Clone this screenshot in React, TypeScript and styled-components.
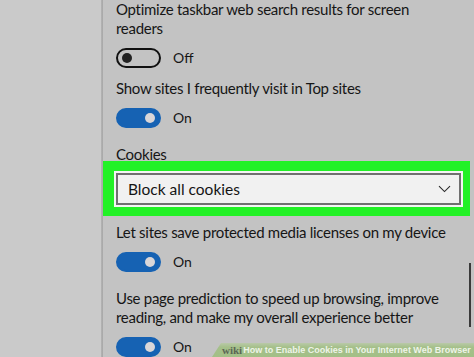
import styled, { createGlobalStyle } from "styled-components";

const GlobalStyle = createGlobalStyle`
  html, body {
    margin: 0;
    padding: 0;
    width: 474px;
    height: 357px;
    overflow: hidden;
    background: #c9c9c9;
  }
  * { box-sizing: border-box; }
`;

export default function App() {
  return (
    <Page>
      <GlobalStyle />
      <SidePane />
      <Divider />
      <Settings>
        <Label>
          Optimize taskbar web search results for screen
          <br />
          readers
        </Label>
        <ToggleRow>
          <Toggle $on={false} />
          <State>Off</State>
        </ToggleRow>

        <Label $gap={11}>Show sites I frequently visit in Top sites</Label>
        <ToggleRow>
          <Toggle $on />
          <State>On</State>
        </ToggleRow>

        <Label $gap={17}>Cookies</Label>
        <Highlight>
          <Dropdown>
            <span>Block all cookies</span>
            <svg width="13" height="8" viewBox="0 0 13 8">
              <path d="M1 1.2 L6.5 6.6 L12 1.2" fill="none" stroke="#2a2a2a" strokeWidth="1.1" />
            </svg>
          </Dropdown>
        </Highlight>

        <Label $gap={7}>Let sites save protected media licenses on my device</Label>
        <ToggleRow>
          <Toggle $on />
          <State>On</State>
        </ToggleRow>

        <Label $gap={17}>
          Use page prediction to speed up browsing, improve
          <br />
          reading, and make my overall experience better
        </Label>
        <ToggleRow>
          <Toggle $on />
          <State>On</State>
        </ToggleRow>

        <Scrollbar />
      </Settings>

      <Watermark>
        <b>wiki</b>
        <span>How to Enable Cookies in Your Internet Web Browser</span>
      </Watermark>
    </Page>
  );
}

const Page = styled.div`
  position: relative;
  display: flex;
  width: 474px;
  height: 357px;
  overflow: hidden;
  font-family: Lato, "Open Sans", sans-serif;
  color: #161616;
`;

const SidePane = styled.div`
  flex: 0 0 101px;
  background: #cacaca;
`;

const Divider = styled.div`
  flex: 0 0 2px;
  background: linear-gradient(90deg, #b4b4b4, #a6a6a6);
`;

const Settings = styled.div`
  position: relative;
  flex: 1;
  min-width: 0;
  display: flex;
  flex-direction: column;
  align-items: flex-start;
  padding: 0 0 0 13px;
  background: #c3c3c3;
`;

const Label = styled.div<{ $gap?: number }>`
  margin-top: ${(p) => p.$gap ?? 0}px;
  font-size: 15px;
  letter-spacing: -0.28px;
  line-height: 19px;
  white-space: nowrap;
`;

const ToggleRow = styled.div`
  display: flex;
  align-items: center;
  gap: 12px;
  margin-top: 10px;
  height: 20px;
`;

const Toggle = styled.div<{ $on: boolean }>`
  position: relative;
  width: 45px;
  height: 20px;
  border-radius: 10px;
  border: 2px solid ${(p) => (p.$on ? "#1662b3" : "#111")};
  background: ${(p) => (p.$on ? "#1662b3" : "transparent")};
  &::after {
    content: "";
    position: absolute;
    top: 3px;
    ${(p) => (p.$on ? "right: 4px;" : "left: 4px;")}
    width: 10px;
    height: 10px;
    border-radius: 50%;
    background: ${(p) => (p.$on ? "#d9d6d8" : "#222")};
  }
`;

const State = styled.span`
  font-size: 14px;
  line-height: 20px;
`;

const Highlight = styled.div`
  margin: -3px 0 0 -13px;
  width: 367px;
  height: 56px;
  padding: 12px 9px 0 13px;
  background: #22f126;
`;

const Dropdown = styled.div`
  display: flex;
  align-items: center;
  justify-content: space-between;
  height: 32px;
  padding: 0 8px 0 10px;
  border: 2px solid #707070;
  background: #f1f1f1;
  box-shadow: 0 0 0 2px #f4f4f4;
  font-size: 15.5px;
  color: #141414;
`;

const Scrollbar = styled.div`
  position: absolute;
  right: 3px;
  top: 263px;
  width: 2px;
  height: 64px;
  background: #3a3a3a;
`;

const Watermark = styled.div`
  position: absolute;
  right: 0;
  bottom: 0;
  width: 262px;
  height: 14px;
  display: flex;
  align-items: center;
  gap: 1px;
  padding-left: 10px;
  background: linear-gradient(180deg, #b9c9a8 0%, #a5c08a 30%, #a3bf87 100%);
  clip-path: polygon(9px 0, 100% 0, 100% 100%, 0 100%);
  b {
    font-family: "Liberation Serif", serif;
    font-size: 11px;
    font-weight: bold;
    color: #5c6655;
  }
  span {
    font-family: "Liberation Sans", sans-serif;
    font-size: 9px;
    font-weight: bold;
    color: #eef4e8;
    white-space: nowrap;
  }
`;
